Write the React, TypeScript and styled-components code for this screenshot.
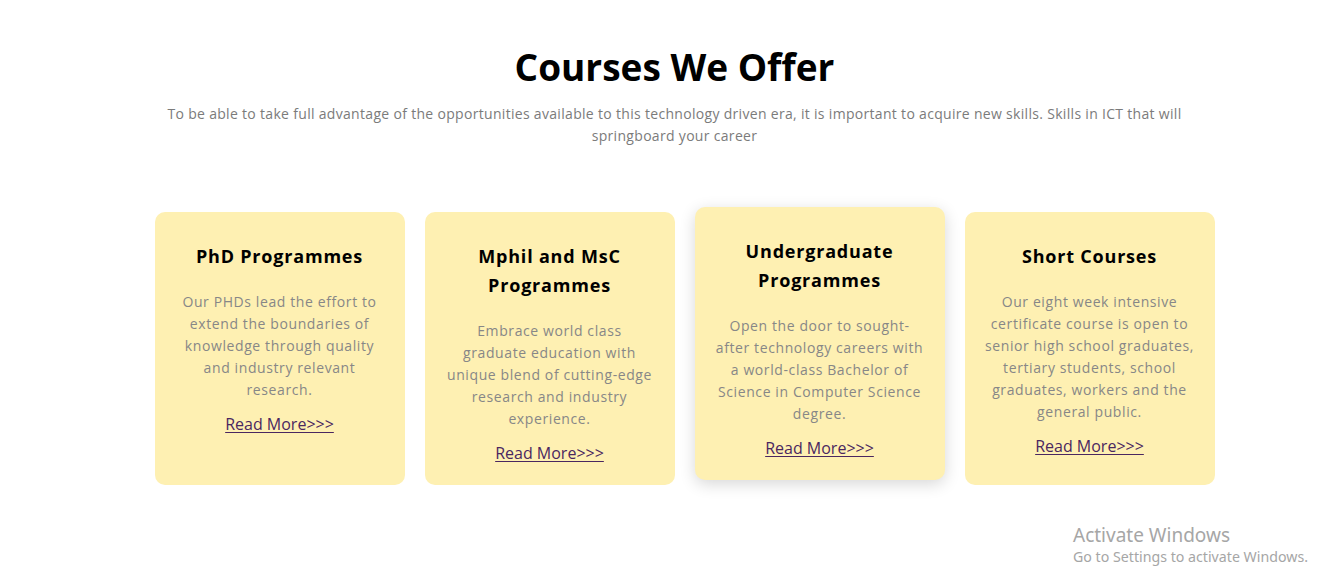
import React from "react";
import styled, { createGlobalStyle } from "styled-components";

const Global = createGlobalStyle`
  html, body { margin: 0; padding: 0; background: #ffffff; }
  body { font-family: "Open Sans", "Noto Sans", Arial, sans-serif; }
  * { box-sizing: border-box; }
`;

const Section = styled.section`
  width: 1329px;
  height: 583px;
  padding-top: 38px;
  position: relative;
  overflow: hidden;
`;

const Header = styled.header`
  display: flex;
  flex-direction: column;
  align-items: center;
  padding-left: 20px;
`;

const Title = styled.h2`
  margin: 0;
  font-family: "Open Sans", sans-serif;
  font-weight: 700;
  font-size: 37px;
  line-height: 57px;
  color: #000;
  letter-spacing: 0px;
`;

const Subtitle = styled.p`
  margin: 8px 0 0;
  max-width: 1040px;
  text-align: center;
  font-size: 14px;
  line-height: 22px;
  color: #7b7b7b;
  font-weight: 400;
  letter-spacing: 0.31px;
`;

const Grid = styled.div`
  display: grid;
  grid-template-columns: repeat(4, 250px);
  gap: 20px;
  justify-content: center;
  margin: 65px 0 0 40px;
`;

const Card = styled.article<{ $raised?: boolean }>`
  background: #fef0b2;
  border-radius: 10px;
  padding: 30px 20px 20px;
  display: flex;
  flex-direction: column;
  align-items: center;
  text-align: center;
  min-height: 273px;
  transform: ${(p) => (p.$raised ? "translateY(-5px)" : "none")};
  box-shadow: ${(p) => (p.$raised ? "0 4px 16px rgba(0,0,0,0.16)" : "none")};
`;

const CardTitle = styled.h3`
  margin: 0;
  font-weight: 700;
  font-size: 18px;
  line-height: 29px;
  color: #000;
  padding: 0 10px;
  letter-spacing: 0.8px;
`;

const CardText = styled.p`
  margin: 20px 0 0;
  font-size: 14px;
  line-height: 22px;
  color: #878787;
  letter-spacing: 0.6px;
`;

const ReadMore = styled.a`
  margin-top: 11px;
  font-size: 16px;
  line-height: 24px;
  color: #4a2760;
  text-decoration: underline;
  text-underline-offset: 2px;
  text-decoration-thickness: 1px;
`;

const Watermark = styled.div`
  position: absolute;
  left: 1073px;
  top: 522px;
  color: #a6a6a6;
  pointer-events: none;
  font-family: "Noto Sans", sans-serif;
`;

const WmTitle = styled.div`
  font-size: 19px;
  line-height: 26px;
`;

const WmText = styled.div`
  font-size: 14.2px;
  line-height: 18px;
`;

const courses = [
  {
    title: "PhD Programmes",
    text: "Our PHDs lead the effort to extend the boundaries of knowledge through quality and industry relevant research.",
  },
  {
    title: "Mphil and MsC Programmes",
    text: "Embrace world class graduate education with unique blend of cutting-edge research and industry experience.",
  },
  {
    title: "Undergraduate Programmes",
    text: "Open the door to sought-after technology careers with a world-class Bachelor of Science in Computer Science degree.",
    raised: true,
  },
  {
    title: "Short Courses",
    text: "Our eight week intensive certificate course is open to senior high school graduates, tertiary students, school graduates, workers and the general public.",
  },
];

export default function App() {
  return (
    <>
      <Global />
      <Section>
        <Header>
          <Title>Courses We Offer</Title>
          <Subtitle>
            To be able to take full advantage of the opportunities available to this technology driven era, it is
            important to acquire new skills. Skills in ICT that will springboard your career
          </Subtitle>
        </Header>
        <Grid>
          {courses.map((c) => (
            <Card key={c.title} $raised={c.raised}>
              <CardTitle>{c.title}</CardTitle>
              <CardText>{c.text}</CardText>
              <ReadMore href="#">Read More&gt;&gt;&gt;</ReadMore>
            </Card>
          ))}
        </Grid>
        <Watermark>
          <WmTitle>Activate Windows</WmTitle>
          <WmText>Go to Settings to activate Windows.</WmText>
        </Watermark>
      </Section>
    </>
  );
}
